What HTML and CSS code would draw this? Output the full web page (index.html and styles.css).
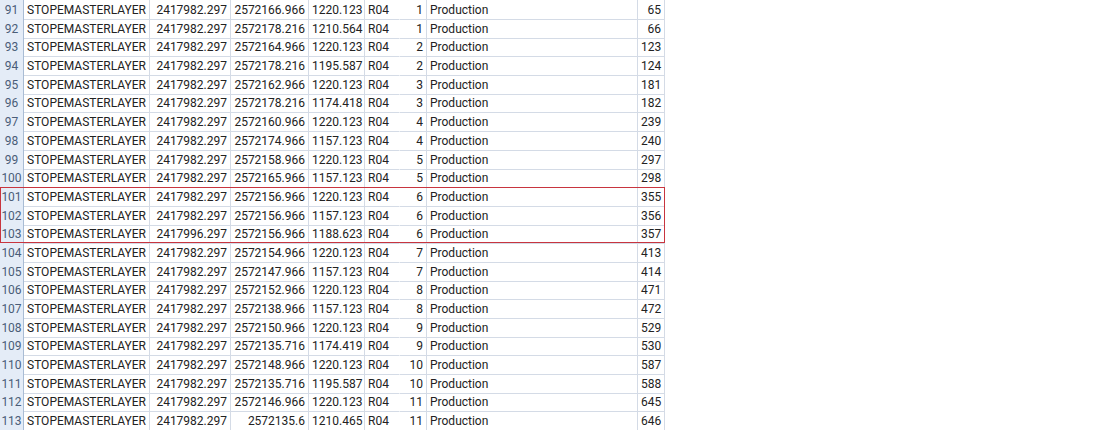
FILE: index.html
```html
<!doctype html>
<html>
<head>
<meta charset="utf-8">
<title>sheet</title>
<link rel="stylesheet" href="styles.css">
</head>
<body>
<div class="sheet">
	<div class="row"><div class="rh">91</div><div>STOPEMASTERLAYER</div><div class="n">2417982.297</div><div class="n">2572166.966</div><div class="n">1220.123</div><div class="code">R04</div><div class="n">1</div><div>Production</div><div class="n">65</div></div>
	<div class="row"><div class="rh">92</div><div>STOPEMASTERLAYER</div><div class="n">2417982.297</div><div class="n">2572178.216</div><div class="n">1210.564</div><div class="code">R04</div><div class="n">1</div><div>Production</div><div class="n">66</div></div>
	<div class="row"><div class="rh">93</div><div>STOPEMASTERLAYER</div><div class="n">2417982.297</div><div class="n">2572164.966</div><div class="n">1220.123</div><div class="code">R04</div><div class="n">2</div><div>Production</div><div class="n">123</div></div>
	<div class="row"><div class="rh">94</div><div>STOPEMASTERLAYER</div><div class="n">2417982.297</div><div class="n">2572178.216</div><div class="n">1195.587</div><div class="code">R04</div><div class="n">2</div><div>Production</div><div class="n">124</div></div>
	<div class="row"><div class="rh">95</div><div>STOPEMASTERLAYER</div><div class="n">2417982.297</div><div class="n">2572162.966</div><div class="n">1220.123</div><div class="code">R04</div><div class="n">3</div><div>Production</div><div class="n">181</div></div>
	<div class="row"><div class="rh">96</div><div>STOPEMASTERLAYER</div><div class="n">2417982.297</div><div class="n">2572178.216</div><div class="n">1174.418</div><div class="code">R04</div><div class="n">3</div><div>Production</div><div class="n">182</div></div>
	<div class="row"><div class="rh">97</div><div>STOPEMASTERLAYER</div><div class="n">2417982.297</div><div class="n">2572160.966</div><div class="n">1220.123</div><div class="code">R04</div><div class="n">4</div><div>Production</div><div class="n">239</div></div>
	<div class="row"><div class="rh">98</div><div>STOPEMASTERLAYER</div><div class="n">2417982.297</div><div class="n">2572174.966</div><div class="n">1157.123</div><div class="code">R04</div><div class="n">4</div><div>Production</div><div class="n">240</div></div>
	<div class="row"><div class="rh">99</div><div>STOPEMASTERLAYER</div><div class="n">2417982.297</div><div class="n">2572158.966</div><div class="n">1220.123</div><div class="code">R04</div><div class="n">5</div><div>Production</div><div class="n">297</div></div>
	<div class="row"><div class="rh">100</div><div>STOPEMASTERLAYER</div><div class="n">2417982.297</div><div class="n">2572165.966</div><div class="n">1157.123</div><div class="code">R04</div><div class="n">5</div><div>Production</div><div class="n">298</div></div>
	<div class="row"><div class="rh">101</div><div>STOPEMASTERLAYER</div><div class="n">2417982.297</div><div class="n">2572156.966</div><div class="n">1220.123</div><div class="code">R04</div><div class="n">6</div><div>Production</div><div class="n">355</div></div>
	<div class="row"><div class="rh">102</div><div>STOPEMASTERLAYER</div><div class="n">2417982.297</div><div class="n">2572156.966</div><div class="n">1157.123</div><div class="code">R04</div><div class="n">6</div><div>Production</div><div class="n">356</div></div>
	<div class="row"><div class="rh">103</div><div>STOPEMASTERLAYER</div><div class="n">2417996.297</div><div class="n">2572156.966</div><div class="n">1188.623</div><div class="code">R04</div><div class="n">6</div><div>Production</div><div class="n">357</div></div>
	<div class="row"><div class="rh">104</div><div>STOPEMASTERLAYER</div><div class="n">2417982.297</div><div class="n">2572154.966</div><div class="n">1220.123</div><div class="code">R04</div><div class="n">7</div><div>Production</div><div class="n">413</div></div>
	<div class="row"><div class="rh">105</div><div>STOPEMASTERLAYER</div><div class="n">2417982.297</div><div class="n">2572147.966</div><div class="n">1157.123</div><div class="code">R04</div><div class="n">7</div><div>Production</div><div class="n">414</div></div>
	<div class="row"><div class="rh">106</div><div>STOPEMASTERLAYER</div><div class="n">2417982.297</div><div class="n">2572152.966</div><div class="n">1220.123</div><div class="code">R04</div><div class="n">8</div><div>Production</div><div class="n">471</div></div>
	<div class="row"><div class="rh">107</div><div>STOPEMASTERLAYER</div><div class="n">2417982.297</div><div class="n">2572138.966</div><div class="n">1157.123</div><div class="code">R04</div><div class="n">8</div><div>Production</div><div class="n">472</div></div>
	<div class="row"><div class="rh">108</div><div>STOPEMASTERLAYER</div><div class="n">2417982.297</div><div class="n">2572150.966</div><div class="n">1220.123</div><div class="code">R04</div><div class="n">9</div><div>Production</div><div class="n">529</div></div>
	<div class="row"><div class="rh">109</div><div>STOPEMASTERLAYER</div><div class="n">2417982.297</div><div class="n">2572135.716</div><div class="n">1174.419</div><div class="code">R04</div><div class="n">9</div><div>Production</div><div class="n">530</div></div>
	<div class="row"><div class="rh">110</div><div>STOPEMASTERLAYER</div><div class="n">2417982.297</div><div class="n">2572148.966</div><div class="n">1220.123</div><div class="code">R04</div><div class="n">10</div><div>Production</div><div class="n">587</div></div>
	<div class="row"><div class="rh">111</div><div>STOPEMASTERLAYER</div><div class="n">2417982.297</div><div class="n">2572135.716</div><div class="n">1195.587</div><div class="code">R04</div><div class="n">10</div><div>Production</div><div class="n">588</div></div>
	<div class="row"><div class="rh">112</div><div>STOPEMASTERLAYER</div><div class="n">2417982.297</div><div class="n">2572146.966</div><div class="n">1220.123</div><div class="code">R04</div><div class="n">11</div><div>Production</div><div class="n">645</div></div>
	<div class="row"><div class="rh">113</div><div>STOPEMASTERLAYER</div><div class="n">2417982.297</div><div class="n">2572135.6</div><div class="n">1210.465</div><div class="code">R04</div><div class="n">11</div><div>Production</div><div class="n">646</div></div>
	<div class="mark"></div>
</div>
</body>
</html>
```
FILE: styles.css
```css
body{
	margin: 0;
	background: #fff;
	font-family: Roboto, "Liberation Sans", sans-serif;
	font-size: 12px;
	color: #222;
}
.sheet{
	position: relative;
	width: 665px;
}
.row{
	display: grid;
	grid-template-columns: 24px 126px 81px 78px 56px 35px 27px 211px 27px;
	height: 18.7px;
}
.row > div{
	box-sizing: border-box;
	border-right: 1px solid #d4dbe6;
	border-bottom: 1px solid #d4dbe6;
	padding: 1px 3px 0 3px;
	line-height: 18px;
	white-space: nowrap;
}
.row .n{
	text-align: right;
}
.row .code{
	border-right-color: transparent;
}
.row .rh{
	background: #e4ecf7;
	color: #4a5d78;
	text-align: center;
	padding: 1px 0 0 0;
	border-right-color: #a9bcd4;
	border-bottom-color: #c9d6e8;
}
/* rows 101-103 highlighted */
.mark{
	position: absolute;
	left: 0;
	top: 187px;
	width: 665px;
	height: 56px;
	box-sizing: border-box;
	border: 1px solid #c8353f;
}
```
